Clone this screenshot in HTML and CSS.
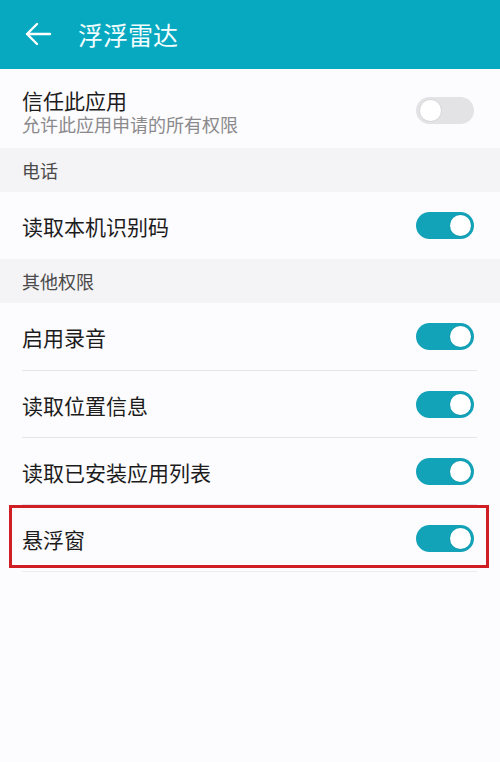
FILE: index.html
```html
<!DOCTYPE html>
<html lang="zh-CN">
<head>
<meta charset="utf-8">
<title>浮浮雷达</title>
<link rel="stylesheet" href="styles.css">
</head>
<body>
<header class="appbar">
  <svg class="back" width="28" height="24" viewBox="0 0 28 24" aria-hidden="true">
    <path d="M26 12H3M13 2L3 12l10 10" fill="none" stroke="#fff" stroke-width="2.4" stroke-linecap="round" stroke-linejoin="round"/>
  </svg>
  <h1 class="title">浮浮雷达</h1>
</header>

<div class="group">
  <div class="row row-tall">
    <div class="texts">
      <div class="label">信任此应用</div>
      <div class="sub">允许此应用申请的所有权限</div>
    </div>
    <span class="switch"></span>
  </div>
</div>

<div class="section">电话</div>
<div class="group">
  <div class="row">
    <div class="label">读取本机识别码</div>
    <span class="switch on"></span>
  </div>
</div>

<div class="section">其他权限</div>
<div class="group">
  <div class="row divided">
    <div class="label">启用录音</div>
    <span class="switch on"></span>
  </div>
  <div class="row divided">
    <div class="label">读取位置信息</div>
    <span class="switch on"></span>
  </div>
  <div class="row divided">
    <div class="label">读取已安装应用列表</div>
    <span class="switch on"></span>
  </div>
  <div class="row divided highlight">
    <div class="label">悬浮窗</div>
    <span class="switch on"></span>
  </div>
</div>
</body>
</html>
```

FILE: styles.css
```css
* { box-sizing: border-box; }
html, body {
  margin: 0;
  padding: 0;
  background: #fcfbfd;
  font-family: "Noto Sans CJK SC", "Noto Sans", sans-serif;
  color: #1c1c1c;
}
.appbar {
  height: 69px;
  background: #06a9c0;
  display: flex;
  align-items: center;
  padding-left: 24px;
}
.back { display: block; margin-top: -2px; }
.title {
  margin: 0 0 0 26px;
  font-size: 25px;
  font-weight: 400;
  color: #f2fdff;
  line-height: 30px;
  margin-top: -2px;
}
.group {
  padding: 0 23px 0 22px;
  background: #fcfbfd;
}
.row {
  height: 67px;
  display: flex;
  align-items: center;
  justify-content: space-between;
  position: relative;
}
.row.divided + .row.divided { border-top: 1px solid #e5e4e7; }
.row.divided:first-child { height: 67px; }
.row.highlight { border-bottom: 1px solid #ecebee; height: 68px; }
.row-tall {
  height: 79px;
  padding-top: 3px;
}
.label {
  font-size: 21px;
  line-height: 26px;
  margin-top: 1px;
}
.sub {
  font-size: 18px;
  line-height: 22px;
  color: #8a8a8c;
}
.section {
  height: 44px;
  background: #f4f3f5;
  padding-left: 22px;
  display: flex;
  align-items: center;
  font-size: 18px;
  color: #4a4a4a;
}
.switch {
  width: 58px;
  height: 27px;
  border-radius: 14px;
  background: #e3e3e5;
  margin-right: 3px;
  position: relative;
  flex: none;
}
.switch::after {
  content: "";
  position: absolute;
  top: 3px;
  left: 4px;
  width: 21px;
  height: 21px;
  border-radius: 50%;
  background: #fff;
  box-shadow: 0 0 0 1px rgba(0,0,0,0.04);
}
.switch.on { background: #13a3b9; }
.switch.on::after { left: auto; right: 3px; }
.highlight::after {
  content: "";
  position: absolute;
  left: -13px;
  right: -12px;
  top: 0;
  bottom: 3px;
  border: 3px solid #cf1e24;
}
```
